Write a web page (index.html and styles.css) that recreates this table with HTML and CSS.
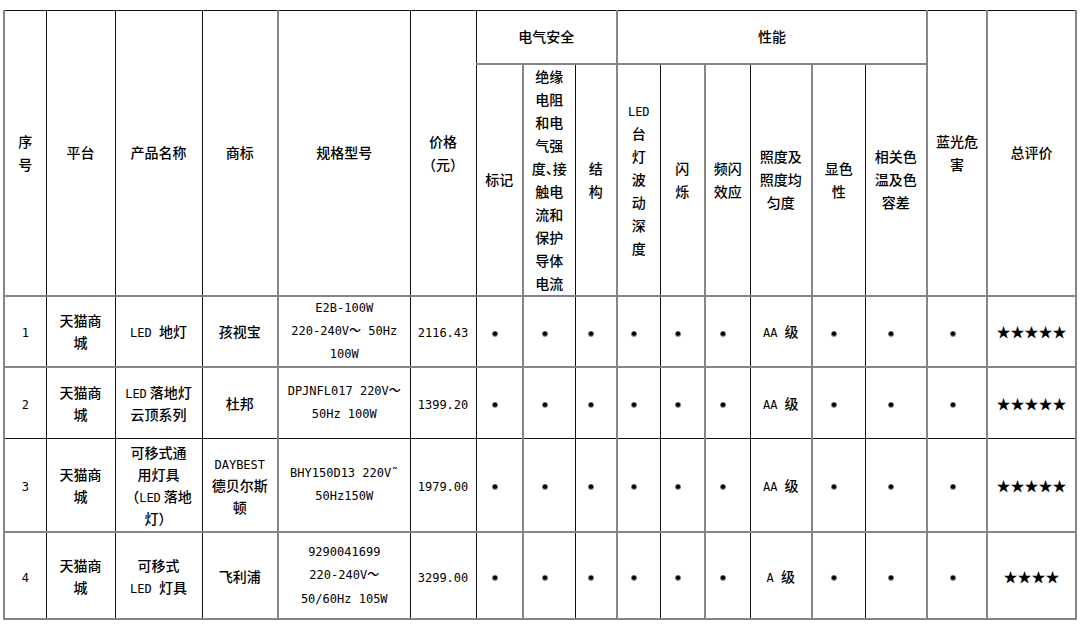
FILE: index.html
```html
<!DOCTYPE html>
<html lang="zh-CN">
<head>
<meta charset="utf-8">
<title>LED 灯具比较试验结果</title>
<link rel="stylesheet" href="styles.css">
</head>
<body>
<div class="page">
<table class="grid">
<colgroup>
<col class="c1 g"><col class="c2"><col class="c3"><col class="c4"><col class="c5 g"><col class="c6">
<col class="c7"><col class="c8 g"><col class="c9">
<col class="c10 g"><col class="c11"><col class="c12 g"><col class="c13"><col class="c14 g"><col class="c15">
<col class="c16 g"><col class="c17 g">
</colgroup>
<thead>
<tr class="h1">
<th rowspan="2">序<br>号</th>
<th rowspan="2">平台</th>
<th rowspan="2">产品名称</th>
<th rowspan="2">商标</th>
<th rowspan="2">规格型号</th>
<th rowspan="2">价格<br>（元）</th>
<th colspan="3">电气安全</th>
<th colspan="6">性能</th>
<th rowspan="2">蓝光危<br>害</th>
<th rowspan="2">总评价</th>
</tr>
<tr class="h2 g">
<th>标记</th>
<th>绝缘<br>电阻<br>和电<br>气强<br>度<span class="halt">、</span>接<br>触电<br>流和<br>保护<br>导体<br>电流</th>
<th>结<br>构</th>
<th><span class="m">LED</span><br>台<br>灯<br>波<br>动<br>深<br>度</th>
<th>闪<br>烁</th>
<th>频闪<br>效应</th>
<th>照度及<br>照度均<br>匀度</th>
<th>显色<br>性</th>
<th>相关色<br>温及色<br>容差</th>
</tr>
</thead>
<tbody>
<tr class="r1 g">
<td><span class="m">1</span></td>
<td>天猫商<br>城</td>
<td><span class="m">LED </span>地灯</td>
<td>孩视宝</td>
<td class="spec">E2B-100W<br>220-240V～ 50Hz<br>100W</td>
<td><span class="m">2116.43</span></td>
<td><i class="dot"></i></td><td><i class="dot"></i></td><td><i class="dot"></i></td>
<td><i class="dot"></i></td><td><i class="dot"></i></td><td><i class="dot"></i></td>
<td><span class="m">AA </span>级</td>
<td><i class="dot"></i></td><td><i class="dot"></i></td><td><i class="dot"></i></td>
<td class="stars">★★★★★</td>
</tr>
<tr class="r2 g">
<td><span class="m">2</span></td>
<td>天猫商<br>城</td>
<td><span class="m t">LED</span>落地灯<br>云顶系列</td>
<td>杜邦</td>
<td class="spec">DPJNFL017 220V～<br>50Hz 100W</td>
<td><span class="m">1399.20</span></td>
<td><i class="dot"></i></td><td><i class="dot"></i></td><td><i class="dot"></i></td>
<td><i class="dot"></i></td><td><i class="dot"></i></td><td><i class="dot"></i></td>
<td><span class="m">AA </span>级</td>
<td><i class="dot"></i></td><td><i class="dot"></i></td><td><i class="dot"></i></td>
<td class="stars">★★★★★</td>
</tr>
<tr class="r3">
<td><span class="m">3</span></td>
<td>天猫商<br>城</td>
<td>可移式通<br>用灯具<br>（<span class="m t">LED</span>落地<br>灯）</td>
<td><span class="m">DAYBEST</span><br>德贝尔斯<br>顿</td>
<td class="spec">BHY150D13 220V˜<br>50Hz150W</td>
<td><span class="m">1979.00</span></td>
<td><i class="dot"></i></td><td><i class="dot"></i></td><td><i class="dot"></i></td>
<td><i class="dot"></i></td><td><i class="dot"></i></td><td><i class="dot"></i></td>
<td><span class="m">AA </span>级</td>
<td><i class="dot"></i></td><td><i class="dot"></i></td><td><i class="dot"></i></td>
<td class="stars">★★★★★</td>
</tr>
<tr class="r4 g">
<td><span class="m">4</span></td>
<td>天猫商<br>城</td>
<td>可移式<br><span class="m">LED </span>灯具</td>
<td>飞利浦</td>
<td class="spec">9290041699<br>220-240V～<br>50/60Hz 105W</td>
<td><span class="m">3299.00</span></td>
<td><i class="dot"></i></td><td><i class="dot"></i></td><td><i class="dot"></i></td>
<td><i class="dot"></i></td><td><i class="dot"></i></td><td><i class="dot"></i></td>
<td><span class="m">A </span>级</td>
<td><i class="dot"></i></td><td><i class="dot"></i></td><td><i class="dot"></i></td>
<td class="stars">★★★★</td>
</tr>
</tbody>
</table>
</div>
</body>
</html>
```
FILE: styles.css
```css
body {
  margin: 0;
  background: #fff;
}

.page {
  padding: 10px 0 0 3px;
}

.grid {
  border-collapse: collapse;
  table-layout: fixed;
  width: 1072px;
  font-family: "Noto Sans CJK SC", sans-serif;
  font-size: 14px;
  color: #000;
  border-top: 1px solid #000;
  border-left: 2px solid #858585;
  border-right: 2px solid #858585;
  border-bottom: 2px solid #858585;
}

.grid th,
.grid td {
  border: 1px solid #111;
  padding: 0 1px;
  text-align: center;
  vertical-align: middle;
  font-weight: 500;
  line-height: 23px;
  overflow: hidden;
  white-space: nowrap;
}

.grid td {
  line-height: 22px;
}

.grid td.spec {
  font-family: "DejaVu Sans Mono", "Noto Sans CJK SC", monospace;
  font-size: 12px;
  line-height: 23.3px;
}

col.g {
  border-left: 2px solid #858585;
}

tr.g {
  border-top: 2px solid #858585;
}

.c1 { width: 42px; }
.c2 { width: 69px; }
.c3 { width: 87px; }
.c4 { width: 76px; }
.c5 { width: 132px; }
.c6 { width: 66px; }
.c7 { width: 47px; }
.c8 { width: 52px; }
.c9 { width: 42px; }
.c10 { width: 43px; }
.c11 { width: 45px; }
.c12 { width: 45px; }
.c13 { width: 62px; }
.c14 { width: 53px; }
.c15 { width: 62px; }
.c16 { width: 60px; }
.c17 { width: 89px; }

.h1 { height: 53px; }
.h2 { height: 232px; }
.r1 { height: 71px; }
.r2 { height: 71px; }
.r3 { height: 94px; }
.r4 { height: 87px; }

.m {
  font-family: "DejaVu Sans Mono", "Noto Sans CJK SC", monospace;
  font-size: 12px;
  line-height: 1;
}

.m.t {
  margin-right: 3px;
}

.halt {
  font-feature-settings: "halt" 1;
}

.dot {
  display: inline-block;
  width: 6px;
  height: 6px;
  border-radius: 50%;
  background: radial-gradient(circle at 50% 45%, #000 0 1.6px, #444 2px, #999 3px);
  margin-right: 9px;
  vertical-align: middle;
}

.stars {
  font-size: 14px;
}
```
